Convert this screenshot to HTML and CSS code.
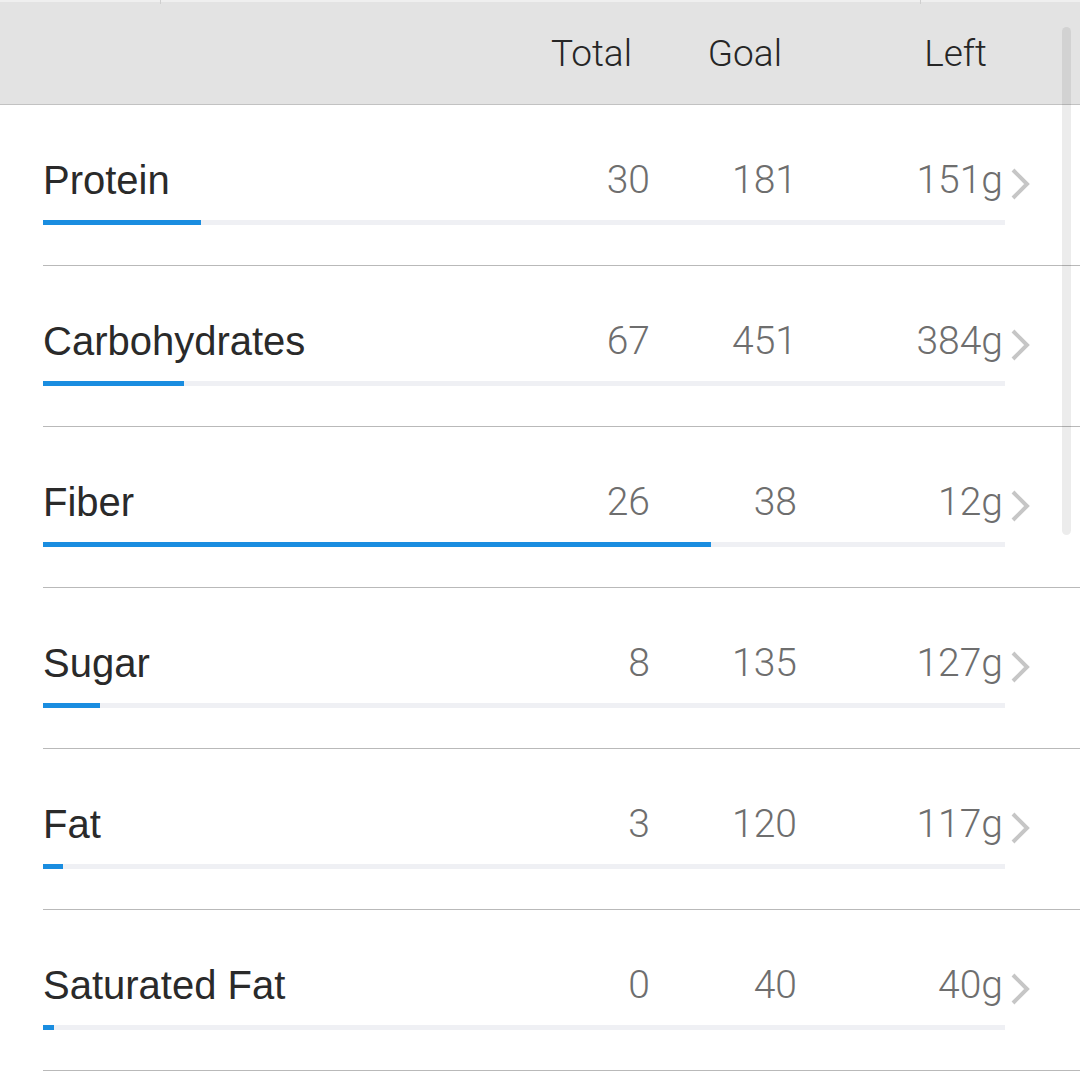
FILE: index.html
```html
<!DOCTYPE html>
<html>
<head>
<meta charset="utf-8">
<link rel="stylesheet" href="styles.css">
</head>
<body>
<div class="screen">
  <div class="header">
    <span class="tick tick-a"></span>
    <span class="tick tick-b"></span>
    <div class="hcell"></div>
    <div class="hcell num h-total">Total</div>
    <div class="hcell num h-goal">Goal</div>
    <div class="hcell num h-left">Left</div>
  </div>

  <div class="row">
    <div class="line">
      <div class="label">Protein</div>
      <div class="val">30</div>
      <div class="val">181</div>
      <div class="val">151g</div>
      <div class="chev"><svg viewBox="0 0 20 34" width="20" height="34"><polyline points="3,3 17,17 3,31" /></svg></div>
    </div>
    <div class="track"><div class="fill" style="width:16.4%"></div></div>
  </div>

  <div class="row">
    <div class="line">
      <div class="label">Carbohydrates</div>
      <div class="val">67</div>
      <div class="val">451</div>
      <div class="val">384g</div>
      <div class="chev"><svg viewBox="0 0 20 34" width="20" height="34"><polyline points="3,3 17,17 3,31" /></svg></div>
    </div>
    <div class="track"><div class="fill" style="width:14.7%"></div></div>
  </div>

  <div class="row">
    <div class="line">
      <div class="label">Fiber</div>
      <div class="val">26</div>
      <div class="val">38</div>
      <div class="val">12g</div>
      <div class="chev"><svg viewBox="0 0 20 34" width="20" height="34"><polyline points="3,3 17,17 3,31" /></svg></div>
    </div>
    <div class="track"><div class="fill" style="width:69.4%"></div></div>
  </div>

  <div class="row">
    <div class="line">
      <div class="label">Sugar</div>
      <div class="val">8</div>
      <div class="val">135</div>
      <div class="val">127g</div>
      <div class="chev"><svg viewBox="0 0 20 34" width="20" height="34"><polyline points="3,3 17,17 3,31" /></svg></div>
    </div>
    <div class="track"><div class="fill" style="width:5.9%"></div></div>
  </div>

  <div class="row">
    <div class="line">
      <div class="label">Fat</div>
      <div class="val">3</div>
      <div class="val">120</div>
      <div class="val">117g</div>
      <div class="chev"><svg viewBox="0 0 20 34" width="20" height="34"><polyline points="3,3 17,17 3,31" /></svg></div>
    </div>
    <div class="track"><div class="fill" style="width:2.1%"></div></div>
  </div>

  <div class="row">
    <div class="line">
      <div class="label">Saturated Fat</div>
      <div class="val">0</div>
      <div class="val">40</div>
      <div class="val">40g</div>
      <div class="chev"><svg viewBox="0 0 20 34" width="20" height="34"><polyline points="3,3 17,17 3,31" /></svg></div>
    </div>
    <div class="track"><div class="fill" style="width:1.15%"></div></div>
  </div>

  <div class="scrollbar"></div>
</div>
</body>
</html>
```
FILE: styles.css
```css
* { box-sizing: border-box; }

html, body {
  margin: 0;
  padding: 0;
  background: #ffffff;
}

.screen {
  position: relative;
  width: 1080px;
  height: 1080px;
  overflow: hidden;
  background: #ffffff;
}

.header {
  position: relative;
  height: 105px;
  background: #e3e3e3;
  border-top: 2px solid #efefef;
  border-bottom: 1px solid #c2c2c2;
  display: grid;
  grid-template-columns: 477px 130px 147px 206px 77px;
  padding-left: 43px;
  padding-top: 1px;
  align-items: center;
}

.tick {
  position: absolute;
  top: -2px;
  width: 1px;
  height: 4px;
  background: #cfcfcf;
}
.tick-a { left: 160px; }
.tick-b { left: 920px; }

.hcell {
  font-family: "Roboto", "Liberation Sans", sans-serif;
  font-weight: 300;
  font-size: 37px;
  color: #262626;
  line-height: 44px;
}

.num { text-align: right; }
.h-total { padding-right: 18px; }
.h-goal { padding-right: 15px; }
.h-left { padding-right: 16px; }

.row {
  height: 161px;
  margin-left: 43px;
  border-bottom: 1px solid #b9b9b9;
  padding-top: 52px;
}

.line {
  display: grid;
  grid-template-columns: 477px 130px 147px 206px 77px;
  align-items: center;
  height: 46px;
}

.label {
  font-family: "Liberation Sans", "Helvetica Neue", Arial, sans-serif;
  font-size: 40px;
  line-height: 46px;
  color: #2a2a2a;
}

.val {
  font-family: "Roboto", "Liberation Sans", sans-serif;
  font-weight: 300;
  font-size: 39px;
  line-height: 46px;
  color: #6e6e6e;
  text-align: right;
}

.chev {
  padding-left: 7px;
  display: flex;
  align-items: center;
  height: 46px;
  padding-top: 8px;
}

.chev svg polyline {
  fill: none;
  stroke: #c6c6c6;
  stroke-width: 4;
  stroke-linecap: butt;
  stroke-linejoin: miter;
}

.track {
  margin-top: 17px;
  margin-right: 75px;
  height: 5px;
  background: #eff0f4;
}

.fill {
  height: 5px;
  background: #1a8de0;
}

.scrollbar {
  position: absolute;
  left: 1062px;
  top: 27px;
  width: 9px;
  height: 508px;
  border-radius: 5px;
  background: rgba(0, 0, 0, 0.075);
}
```
